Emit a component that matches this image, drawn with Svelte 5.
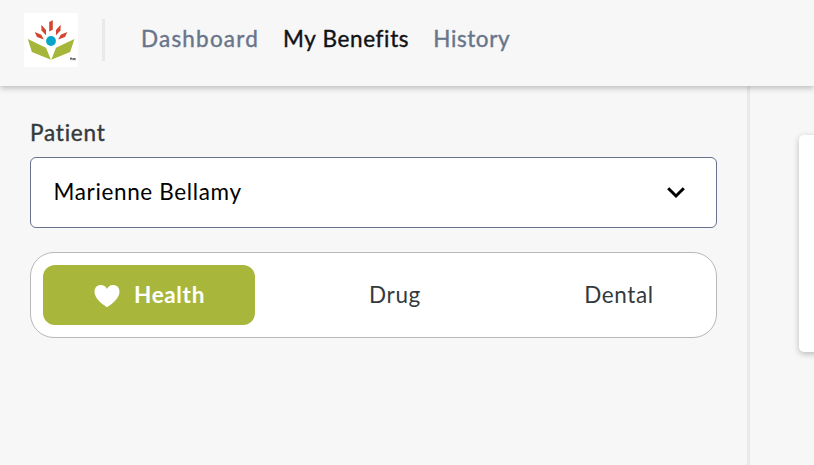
<script>
  const nav = [
    { label: 'Dashboard', active: false, cls: 'dashboard' },
    { label: 'My Benefits', active: true, cls: 'benefits' },
    { label: 'History', active: false, cls: 'history' }
  ];
  let plan = $state('Health');
</script>

<div class="page">
  <header>
    <div class="logo">
      <svg width="54" height="54" viewBox="0 0 54 54" aria-hidden="true">
        <g fill="#a6b63a">
          <path d="M3.8 26 22 34.8 26.9 46.8 7.9 39z" />
          <path d="M50.4 26 32 34.8 27.3 46.8 46.2 39z" />
        </g>
        <g fill="#d3452f">
          <path d="M25.2 9 28.8 7.2V16.7L25.2 18.5z" />
          <path d="M17.3 11.8 22 17V22.3L17.5 17.5z" />
          <path d="M36.7 11.8 32 17V22.3L36.5 17.5z" />
          <path d="M10.7 18.9 17.3 21.7 19.8 26.5 13 24z" />
          <path d="M43.3 18.9 36.7 21.7 34.2 26.5 41 24z" />
        </g>
        <circle cx="27" cy="28" r="4.9" fill="#08a5c9" />
        <path d="M46 45.2H48M47 45.2V47.2M49 47.2V45.2L50 46.5 51 45.2V47.2" fill="none" stroke="#222" stroke-width=".8" />
      </svg>
    </div>
    <div class="divider"></div>
    <nav>
      {#each nav as item}
        <span class={item.cls} class:active={item.active}>{item.label}</span>
      {/each}
    </nav>
  </header>

  <main>
    <section class="side">
      <div class="label"><span>Patient</span></div>
      <div class="select">
        <span>Marienne Bellamy</span>
        <svg width="20" height="14" viewBox="0 0 20 14" aria-hidden="true">
          <path d="M2.2 2.3 10 10 17.8 2.3" fill="none" stroke="#000" stroke-width="3" />
        </svg>
      </div>
      <div class="tabs">
        <button class="health" class:chosen={plan === 'Health'} onclick={() => (plan = 'Health')}>
          <svg width="26" height="24" viewBox="0 0 26 24" aria-hidden="true">
            <path d="M13 23.2C7.5 19.8.5 14.5.5 7.6.5 3.8 3.2 1 6.7 1 9.6 1 11.9 2.5 13 5 14.1 2.5 16.4 1 19.3 1c3.5 0 6.2 2.8 6.2 6.6C25.5 14.5 18.5 19.8 13 23.2z" fill="#fff" />
          </svg>
          <span>Health</span>
        </button>
        <button class="drug" class:chosen={plan === 'Drug'} onclick={() => (plan = 'Drug')}><span>Drug</span></button>
        <button class="dental" class:chosen={plan === 'Dental'} onclick={() => (plan = 'Dental')}><span>Dental</span></button>
      </div>
    </section>
    <section class="content"><div class="card"></div></section>
  </main>
</div>

<style>
  :global(body) { margin: 0; background: #f7f7f7; }
  .page {
    width: 814px; height: 465px; overflow: hidden; display: flex; flex-direction: column;
    background: #f7f7f7; color: #333a3d;
    font: 400 22.5px/30px Lato, "Open Sans", sans-serif;
    font-variant-ligatures: none; letter-spacing: .65px;
  }
  header {
    box-sizing: border-box; height: 86px; flex: none; display: flex; align-items: flex-start;
    padding: 13px 24px; background: #f7f7f7; position: relative; z-index: 1;
    box-shadow: 0 2px 6px rgba(0, 0, 0, .25);
  }
  .logo { width: 54px; height: 54px; background: #fff; }
  .logo svg { display: block; }
  .divider { width: 3px; height: 42px; margin: 6px 0 0 24px; background: #e9e9e9; }
  nav { display: flex; gap: 24px; margin: 11px 0 0 36px; color: #68758b; white-space: nowrap; }
  nav span, .label { -webkit-text-stroke: .4px currentColor; }
  nav .active { color: #101214; }
  .dashboard { letter-spacing: 1.2px; }
  .benefits { letter-spacing: .65px; }
  .history { letter-spacing: .6px; }
  main { flex: 1; display: flex; min-height: 0; }
  .side { box-sizing: border-box; width: 750px; flex: none; padding: 32px 30px 0; border-right: 3px solid #e9e9e9; }
  .label { height: 39px; letter-spacing: .8px; }
  .select {
    box-sizing: border-box; width: 687px; height: 71px; padding: 0 30px 2px 22.5px; color: #000;
    display: flex; align-items: center; justify-content: space-between;
    border: 1px solid #68728d; border-radius: 6px; background: #fff;
  }
  .select svg { margin-top: 3px; }
  .tabs {
    box-sizing: border-box; width: 687px; height: 86px; margin-top: 24px; padding: 12px;
    display: flex; border: 1px solid #b8b8b8; border-radius: 24px; background: #fff;
  }
  button {
    flex: none; width: 212px; height: 60px; padding: 0; border: 0; border-radius: 12px; background: none;
    box-sizing: border-box; display: flex; align-items: center; justify-content: center;
    font: inherit; letter-spacing: inherit; color: inherit; white-space: nowrap;
  }
  .chosen { background: #a8b73b; color: #fff; font-weight: 700; }
  .health svg { margin: 2px 14px 0 1px; }
  .drug { margin-left: 34px; }
  .dental { margin-left: 12px; }
  .content { flex: 1; padding: 49px 0 0 49px; }
  .card { width: 80px; height: 217px; border-radius: 5px; background: #fff; box-shadow: 0 2px 6px rgba(0, 0, 0, .25); }
</style>
